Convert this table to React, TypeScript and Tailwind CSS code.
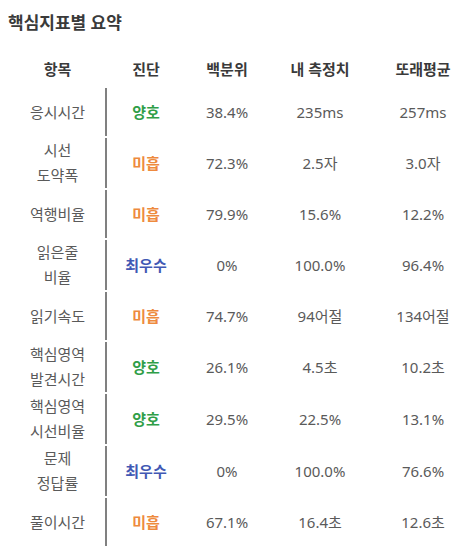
import React from 'react';

type Grade = 'good' | 'poor' | 'best';

interface MetricRow {
  label: string[];
  grade: Grade;
  percentile: string;
  mine: string;
  peer: string;
}

const rows: MetricRow[] = [
  { label: ['응시시간'], grade: 'good', percentile: '38.4%', mine: '235ms', peer: '257ms' },
  { label: ['시선', '도약폭'], grade: 'poor', percentile: '72.3%', mine: '2.5자', peer: '3.0자' },
  { label: ['역행비율'], grade: 'poor', percentile: '79.9%', mine: '15.6%', peer: '12.2%' },
  { label: ['읽은줄', '비율'], grade: 'best', percentile: '0%', mine: '100.0%', peer: '96.4%' },
  { label: ['읽기속도'], grade: 'poor', percentile: '74.7%', mine: '94어절', peer: '134어절' },
  { label: ['핵심영역', '발견시간'], grade: 'good', percentile: '26.1%', mine: '4.5초', peer: '10.2초' },
  { label: ['핵심영역', '시선비율'], grade: 'good', percentile: '29.5%', mine: '22.5%', peer: '13.1%' },
  { label: ['문제', '정답률'], grade: 'best', percentile: '0%', mine: '100.0%', peer: '76.6%' },
  { label: ['풀이시간'], grade: 'poor', percentile: '67.1%', mine: '16.4초', peer: '12.6초' },
];

const gradeStyles: Record<Grade, { text: string; cls: string }> = {
  good: { text: '양호', cls: 'text-[#2f9e48]' },
  poor: { text: '미흡', cls: 'text-[#ee8a3e]' },
  best: { text: '최우수', cls: 'text-[#4158b4]' },
};

const App: React.FC = () => {
  return (
    <div className="w-[476px] h-[552px] bg-white font-['Noto_Sans','Noto_Sans_CJK_KR',sans-serif] overflow-hidden">
      <div className="h-[44px] flex items-center pl-[8px]">
        <h1 className="text-[17px] font-semibold text-[#3a3a3a] leading-none">핵심지표별 요약</h1>
      </div>

      <div className="mt-[8px] pl-[10px]">
        {/* header */}
        <div className="flex h-[35px] items-center text-[15px] font-semibold text-[#3a3a3a]">
          <div className="w-[95px] text-center">항목</div>
          <div className="w-[2px]" />
          <div className="w-[78px] text-center">진단</div>
          <div className="w-[84px] text-center">백분위</div>
          <div className="w-[102px] text-center">내 측정치</div>
          <div className="w-[104px] text-center">또래평균</div>
        </div>

        {/* rows */}
        {rows.map((row) => {
          const g = gradeStyles[row.grade];
          return (
            <div
              key={row.label.join('')}
              className={`flex items-stretch text-[15px] text-[#5a5a5a] leading-[25px] ${
                row.label.length > 1 ? 'h-[52px]' : 'h-[50px]'
              }`}
            >
              <div className="w-[95px] flex flex-col items-center justify-center">
                {row.label.map((l) => (
                  <span key={l}>{l}</span>
                ))}
              </div>
              <div className="w-[2px] my-[1px] bg-[#808080]" />
              <div className={`w-[78px] flex items-center justify-center font-bold ${g.cls}`}>{g.text}</div>
              <div className="w-[84px] flex items-center justify-center">{row.percentile}</div>
              <div className="w-[102px] flex items-center justify-center">{row.mine}</div>
              <div className="w-[104px] flex items-center justify-center">{row.peer}</div>
            </div>
          );
        })}
      </div>
    </div>
  );
};

export default App;
